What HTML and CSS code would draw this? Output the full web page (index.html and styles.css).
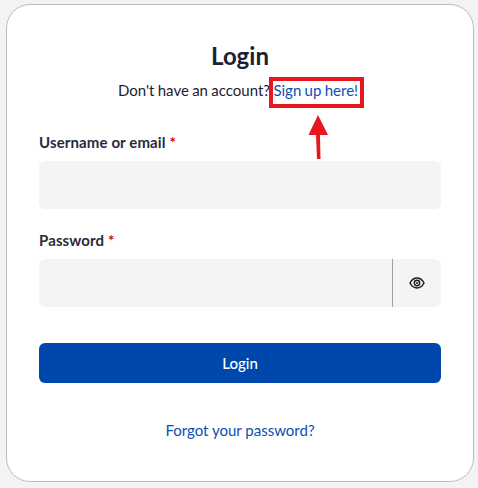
FILE: index.html
```html
<!DOCTYPE html>
<html lang="en">
<head>
<meta charset="utf-8">
<title>Login</title>
<link rel="stylesheet" href="styles.css">
</head>
<body>
<main class="card">
  <h1 class="title">Login</h1>
  <p class="signup">Don't have an account? <a class="link" href="#">Sign up here!</a></p>
  <div class="callout-wrap">
    <span class="callout-box"></span>
    <svg class="callout-arrow" width="24" height="46" viewBox="0 0 24 46"><path d="M12 1 22 21H14L14.500 45H11L10 21H2.500Z" fill="#e8171f"/></svg>
  </div>
  <form class="form">
    <div class="field">
      <label class="label">Username or email <span class="req">*</span></label>
      <div class="control"></div>
    </div>
    <div class="field">
      <label class="label">Password <span class="req">*</span></label>
      <div class="control">
        <span class="eye">
          <svg width="16" height="16" viewBox="0 0 24 24" fill="none" stroke="#1c1c1c" stroke-width="2.200"><path d="M1.500 12c2.500-4.800 6-7.500 10.500-7.500s8 2.700 10.500 7.500c-2.500 4.800-6 7.500-10.500 7.500S4 16.800 1.500 12Z"/><circle cx="12" cy="12" r="4"/><circle cx="12" cy="12" r="1.500" fill="#1c1c1c" stroke="none"/></svg>
        </span>
      </div>
    </div>
    <button class="submit" type="button">Login</button>
  </form>
  <a class="link forgot" href="#">Forgot your password?</a>
</main>
</body>
</html>
```
FILE: styles.css
```css
* { box-sizing: border-box; }
html, body { height: 100%; }
body {
  margin: 0;
  padding: 4px 4px 6px 6px;
  background: #f3f3f3;
  font-family: Lato, "Open Sans", sans-serif;
  color: #212529;
}
.card {
  position: relative;
  height: 478px;
  background: #fff;
  border: 1px solid #bdbdbd;
  border-radius: 24px;
  padding: 37px 32px 0;
  display: flex;
  flex-direction: column;
  align-items: center;
}
.title { margin: 0; font-size: 24px; line-height: 28px; font-weight: 700; color: #1f2033; }
.signup { margin: 10px 0 0; padding-right: 4px; font-size: 15px; line-height: 20px; word-spacing: -0.5px; color: #1f2033; }
.link { color: #0a50b0; text-decoration: none; }
.callout-wrap { position: absolute; left: 0; top: 0; }
.callout-box { position: absolute; left: 262px; top: 72px; width: 95px; height: 31px; border: 4px solid #e8171f; }
.callout-arrow { position: absolute; left: 299px; top: 109px; }
.form { width: 100%; margin-top: 32px; display: flex; flex-direction: column; }
.field { margin-bottom: 21px; }
.label { display: block; font-size: 15px; line-height: 20px; font-weight: 700; letter-spacing: 0.12px; color: #2a2a3a; margin-bottom: 9px; }
.req { color: #d0021b; }
.control { height: 48px; background: #f4f4f4; border-radius: 6px; display: flex; justify-content: flex-end; }
.eye { width: 49px; border-left: 1px solid #9aa0a6; display: flex; align-items: center; justify-content: center; }
.submit { height: 40px; margin-top: 15px; border: 0; border-radius: 6px; background: #0047ab; color: #fff; font: 500 15px Lato, sans-serif; }
.forgot { margin-top: 37px; font-size: 15px; line-height: 20px; }
```
